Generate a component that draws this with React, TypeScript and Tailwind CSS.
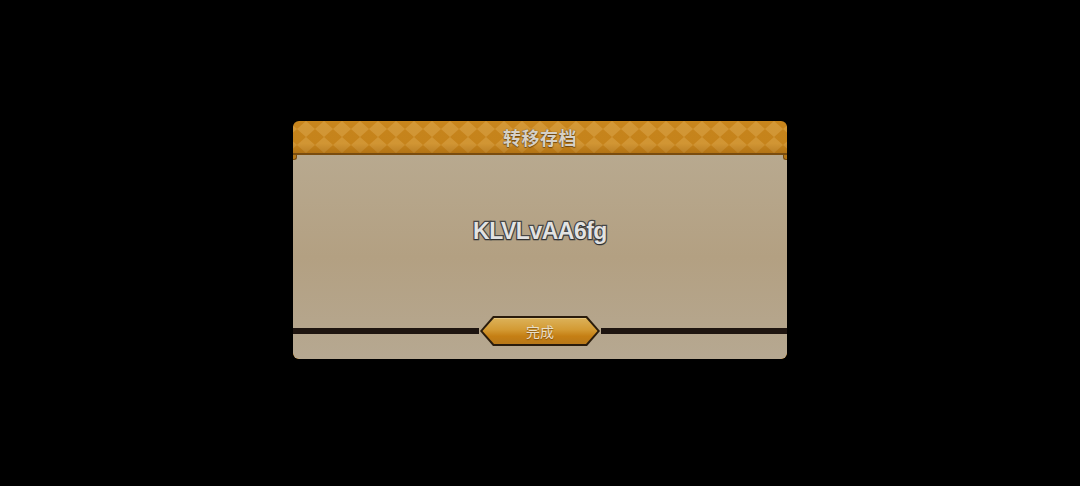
import React from "react";

function DiamondPattern() {
  return (
    <svg className="absolute inset-0 w-full h-full" aria-hidden>
      <defs>
        <pattern id="harlequin" width="18" height="16" patternUnits="userSpaceOnUse" x="4" y="0">
          <polygon points="9,0 18,8 9,16 0,8" fill="#dda548" opacity="0.6" />
        </pattern>
        <linearGradient id="hdrShade" x1="0" y1="0" x2="0" y2="1">
          <stop offset="0" stopColor="#000" stopOpacity="0" />
          <stop offset="0.7" stopColor="#8a5208" stopOpacity="0.05" />
          <stop offset="1" stopColor="#8a5208" stopOpacity="0.35" />
        </linearGradient>
      </defs>
      <rect width="100%" height="100%" fill="url(#harlequin)" />
      <rect width="100%" height="100%" fill="url(#hdrShade)" />
    </svg>
  );
}

function DoneButton() {
  return (
    <div className="relative w-[122px] h-[32px] shrink-0 flex items-center justify-center">
      <svg className="absolute inset-0" width="122" height="32" viewBox="0 0 122 32" aria-hidden>
        <defs>
          <linearGradient id="btnFill" x1="0" y1="0" x2="0" y2="1">
            <stop offset="0" stopColor="#dcb25a" />
            <stop offset="0.45" stopColor="#d39a33" />
            <stop offset="0.7" stopColor="#c57f14" />
            <stop offset="1" stopColor="#b87818" />
          </linearGradient>
        </defs>
        <polygon points="14,1 108,1 121,16 108,31 14,31 1,16" fill="#2a1c0c" />
        <polygon points="15,3 107,3 118.5,16 107,29 15,29 3.5,16" fill="url(#btnFill)" />
        <polyline points="15,3.5 107,3.5" stroke="#ecd7a0" strokeWidth="1" opacity="0.5" />
      </svg>
      <span className="relative text-[14px] text-[#eadfc8] font-['Noto_Sans_CJK_SC',sans-serif] [text-shadow:0_1px_1px_rgba(90,50,0,0.6)]">
        完成
      </span>
    </div>
  );
}

export default function App() {
  return (
    <div className="w-[1080px] h-[486px] bg-black flex justify-center pt-[121px]">
      <div className="relative w-[494px] h-[238px] rounded-[6px] overflow-hidden bg-[#c9861c] flex flex-col">
        {/* header */}
        <div className="relative h-[32px] shrink-0 flex items-center justify-center">
          <DiamondPattern />
          <h1 className="relative text-[18px] font-bold tracking-[0.5px] text-[#d6d0c6] font-['Noto_Sans_CJK_SC',sans-serif] [text-shadow:0_0_1px_rgba(80,50,10,0.9),0_1px_1px_rgba(80,50,10,0.7)]">
            转移存档
          </h1>
        </div>
        <div className="h-[2px] shrink-0 bg-[#7a4c0e]" />

        {/* body */}
        <div className="relative flex-1 flex flex-col bg-gradient-to-b from-[#b8a98f] via-[#b3a082] to-[#b6a891] rounded-b-[6px]">
          <div className="absolute left-0 top-0 w-[4px] h-[5px] bg-[#b67818] rounded-br-[3px] border-r border-b border-[#7a4c0e]" />
          <div className="absolute right-0 top-0 w-[4px] h-[5px] bg-[#b67818] rounded-bl-[3px] border-l border-b border-[#7a4c0e]" />

          <div className="h-[152px] flex items-center justify-center">
            <span className="text-[23px] font-bold tracking-[-0.5px] text-[#e2e2e2] font-['Liberation_Sans',Arial,sans-serif] [-webkit-text-stroke:2.5px_#474747] [paint-order:stroke_fill] [text-shadow:0_1px_1px_rgba(0,0,0,0.35)]">
              KLVLvAA6fg
            </span>
          </div>

          <div className="mt-[8px] h-[32px] flex items-center">
            <div className="flex-1 h-[6px] bg-[#1e1510]" />
            <DoneButton />
            <div className="flex-1 h-[6px] bg-[#1e1510]" />
          </div>
        </div>
      </div>
    </div>
  );
}
